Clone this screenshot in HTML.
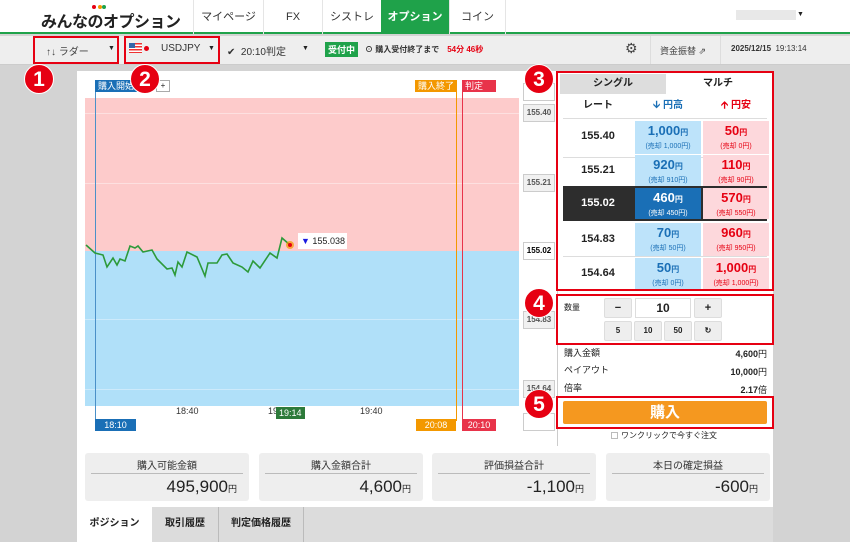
<!DOCTYPE html>
<html><head><meta charset="utf-8"><style>
*{box-sizing:border-box;margin:0;padding:0}
body{width:850px;height:542px;overflow:hidden;background:#d3d3d3;font-family:"Liberation Sans","Noto Sans CJK JP",sans-serif;position:relative;font-size:11px;color:#222}
.a{position:absolute}
.nav{left:0;top:0;width:850px;height:34px;background:#fff;border-bottom:2px solid #1fa24a}
.nv{top:0;height:34px;line-height:34px;text-align:center;font-size:11px;border-left:1px solid #e5e5e5;color:#333}
.tb{left:0;top:36px;width:850px;height:29px;background:#eee;border-bottom:1px solid #ccc}
.red{border:2px solid #e60012}
.circ{width:30px;height:30px;border-radius:50%;background:#e60012;color:#fff;font-size:21px;font-weight:bold;text-align:center;line-height:30px;border:1px solid #fff}
.lbl{font-size:9px;color:#fff;height:12px;line-height:12px;padding:0 3px}
.ax{width:32px;height:18px;background:#f1f1f1;border:1px solid #ccc;font-size:8px;font-weight:bold;color:#555;text-align:center;line-height:16px}
.row{left:563px;width:204px;height:40px;border-bottom:1px solid #ddd}
.rt{position:absolute;left:0;width:70px;text-align:center;top:12px;font-weight:bold;font-size:11px}
.bc,.rc{position:absolute;top:3px;width:66px;height:33px;text-align:center;font-weight:bold;font-size:13px;padding-top:3px;line-height:14px}
.bc{left:72px;background:#bde3fa;color:#1a6fb6}
.rc{left:140px;background:#fdd8dc;color:#e60012}
.bc small,.rc small{display:block;font-size:7px;font-weight:normal}
.bc i,.rc i{font-style:normal;font-size:8px}
.btn{background:#eee;border:1px solid #ddd;border-radius:2px;text-align:center;font-size:8px;font-weight:bold}
.card{top:453px;width:164px;height:48px;background:#eee;border-radius:3px}
.card .t{position:absolute;left:6px;right:6px;top:4px;height:17px;text-align:center;font-size:10px;border-bottom:1px solid #bbb;color:#333}
.card .v{position:absolute;right:12px;top:24px;font-size:17px;color:#222}
.card .v i{font-style:normal;font-size:9px}
</style></head><body>
<div class="a nav"></div>
<div class="a" style="left:41px;top:8px;font-size:16px;font-weight:bold;letter-spacing:-0.5px;color:#222">みんなのオプション</div>
<div class="a" style="left:92px;top:5px;width:4px;height:4px;border-radius:50%;background:#e60012"></div>
<div class="a" style="left:98px;top:5px;width:4px;height:4px;border-radius:50%;background:#f39800"></div>
<div class="a" style="left:102px;top:5px;width:4px;height:4px;border-radius:50%;background:#1fa24a"></div>
<div class="a nv" style="left:193px;width:70px">マイページ</div>
<div class="a nv" style="left:263px;width:59px">FX</div>
<div class="a nv" style="left:322px;width:59px">シストレ</div>
<div class="a nv" style="left:381px;width:68px;background:#1fa24a;color:#fff;font-weight:bold;border:none">オプション</div>
<div class="a nv" style="left:449px;width:56px">コイン</div>
<div class="a" style="left:505px;top:0;width:1px;height:34px;background:#e5e5e5"></div>
<div class="a" style="left:736px;top:10px;width:60px;height:10px;background:#e8e8e8"></div>
<div class="a" style="left:797px;top:11px;font-size:7px">▼</div>
<div class="a tb"></div>
<div class="a red" style="left:33px;top:36px;width:86px;height:28px"></div>
<div class="a" style="left:46px;top:43px;font-size:10px;color:#444">↑↓ ラダー</div>
<div class="a" style="left:108px;top:45px;font-size:7px">▼</div>
<div class="a red" style="left:124px;top:36px;width:96px;height:28px"></div>
<div class="a" style="left:129px;top:43px;width:13px;height:10px;background:repeating-linear-gradient(#e33 0 1.5px,#fff 1.5px 3px)"></div>
<div class="a" style="left:129px;top:43px;width:6px;height:5px;background:#3366aa"></div>
<div class="a" style="left:144px;top:46px;width:5px;height:5px;border-radius:50%;background:#e60012"></div>
<div class="a" style="left:161px;top:43px;font-size:10px;color:#333">USDJPY</div>
<div class="a" style="left:208px;top:45px;font-size:7px">▼</div>
<div class="a" style="left:227px;top:43px;font-size:10px;color:#333">✔&nbsp; 20:10判定</div>
<div class="a" style="left:302px;top:45px;font-size:7px">▼</div>
<div class="a" style="left:325px;top:42px;background:#1fa24a;color:#fff;font-size:9px;font-weight:bold;padding:1px 3px">受付中</div>
<div class="a" style="left:365px;top:44px;font-size:8px;font-weight:bold;color:#333">⊙ 購入受付終了まで　<span style="color:#e60012">54分 46秒</span></div>
<div class="a" style="left:625px;top:40px;font-size:14px;color:#444">⚙</div>
<div class="a" style="left:650px;top:36px;width:1px;height:28px;background:#ddd"></div>
<div class="a" style="left:660px;top:44px;font-size:9px;color:#444">資金振替 ⇗</div>
<div class="a" style="left:720px;top:36px;width:1px;height:28px;background:#ddd"></div>
<div class="a" style="left:731px;top:44px;font-size:8px;font-weight:bold;color:#333">2025/12/15 &nbsp;<span style="font-weight:normal">19:13:14</span></div>

<div class="a" style="left:77px;top:71px;width:696px;height:471px;background:#fff"></div>
<div class="a" style="left:85px;top:98px;width:434px;height:153px;background:#fdcbcb"></div>
<div class="a" style="left:85px;top:251px;width:434px;height:155px;background:#b0e0f9"></div>
<div class="a" style="left:85px;top:113px;width:434px;height:1px;background:#fde0e0"></div>
<div class="a" style="left:85px;top:183px;width:434px;height:1px;background:#fde0e0"></div>
<div class="a" style="left:85px;top:319px;width:434px;height:1px;background:#cdeafb"></div>
<div class="a" style="left:85px;top:389px;width:434px;height:1px;background:#cdeafb"></div>
<div class="a" style="left:95px;top:86px;width:1px;height:335px;background:#4a90c8"></div>
<div class="a" style="left:456px;top:86px;width:1px;height:335px;background:#f39800"></div>
<div class="a" style="left:462px;top:86px;width:1px;height:335px;background:#e8334a"></div>
<div class="a lbl" style="left:95px;top:80px;background:#1a6fb6">購入開始</div>
<div class="a" style="left:156px;top:80px;width:14px;height:12px;border:1px solid #aaa;font-size:8px;text-align:center;line-height:10px">+</div>
<div class="a lbl" style="left:415px;top:80px;background:#f39800">購入終了</div>
<div class="a lbl" style="left:462px;top:80px;background:#e8334a;width:34px">判定</div>
<svg class="a" style="left:0;top:0" width="850" height="542"><polyline fill="none" stroke="#2d9a3a" stroke-width="1.6" points="86,245 95,253 103,255 107,267 113,258 117,265 120,259 125,261 130,246 135,248 138,246 143,252 152,250 157,259 167,269 172,268 175,275 178,262 182,267 187,252 197,257 205,276 208,263 217,263 222,255 227,254 233,263 242,267 248,272 253,261 260,268 270,253 277,258 282,238 290,245"/><circle cx="290" cy="245" r="4" fill="#f39800" opacity=".7"/><circle cx="290" cy="245" r="2" fill="#e60012"/></svg>
<div class="a" style="left:298px;top:233px;width:49px;height:16px;background:#fff;font-size:9px;line-height:16px;padding-left:3px"><span style="color:#1a1ae0;font-size:9px">▼</span> 155.038</div>
<div class="a" style="left:176px;top:406px;font-size:9px;color:#333">18:40</div>
<div class="a" style="left:268px;top:406px;font-size:9px;color:#333">19</div>
<div class="a lbl" style="left:276px;top:407px;background:#2d7a3a;font-size:9px">19:14</div>
<div class="a" style="left:360px;top:406px;font-size:9px;color:#333">19:40</div>
<div class="a lbl" style="left:95px;top:419px;background:#1a6fb6;width:41px;text-align:center">18:10</div>
<div class="a lbl" style="left:416px;top:419px;background:#f39800;width:40px;text-align:center">20:08</div>
<div class="a lbl" style="left:462px;top:419px;background:#e8334a;width:34px;text-align:center">20:10</div>
<div class="a ax" style="left:523px;top:83px;background:#fff"></div>
<div class="a ax" style="left:523px;top:104px">155.40</div>
<div class="a ax" style="left:523px;top:174px">155.21</div>
<div class="a ax" style="left:523px;top:242px;background:#fff;color:#000">155.02</div>
<div class="a ax" style="left:523px;top:311px">154.83</div>
<div class="a ax" style="left:523px;top:380px">154.64</div>
<div class="a ax" style="left:523px;top:413px;background:#fff"></div>

<div class="a" style="left:557px;top:71px;width:216px;height:375px;background:#fff;border-left:1px solid #ccc"></div>
<div class="a" style="left:560px;top:74px;width:106px;height:20px;background:#ddd;text-align:center;line-height:20px;font-weight:bold;font-size:10px">シングル</div>
<div class="a" style="left:666px;top:74px;width:104px;height:20px;text-align:center;line-height:20px;font-weight:bold;font-size:10px">マルチ</div>
<div class="a" style="left:563px;top:96px;width:70px;text-align:center;font-weight:bold;font-size:10px;line-height:20px">レート</div>
<div class="a" style="left:635px;top:96px;width:66px;text-align:center;font-weight:bold;font-size:10px;line-height:20px;color:#1a6fb6">🡫 円高</div>
<div class="a" style="left:703px;top:96px;width:66px;text-align:center;font-weight:bold;font-size:10px;line-height:20px;color:#e60012">🡩 円安</div>
<div class="a" style="left:563px;top:118px;width:204px;height:1px;background:#ddd"></div>
<div class="a row" style="top:118px"><div class="rt">155.40</div><div class="bc">1,000<i>円</i><small>(売却 1,000円)</small></div><div class="rc">50<i>円</i><small>(売却 0円)</small></div></div>
<div class="a row" style="top:152px"><div class="rt">155.21</div><div class="bc">920<i>円</i><small>(売却 910円)</small></div><div class="rc">110<i>円</i><small>(売却 90円)</small></div></div>
<div class="a row" style="top:186px;background:#2d2d2d;height:35px;border:none"><div class="rt" style="color:#fff;top:11px">155.02</div><div class="bc" style="background:#1a6fb6;color:#fff;top:2px;height:31px">460<i>円</i><small>(売却 450円)</small></div><div class="rc" style="top:2px;height:31px">570<i>円</i><small>(売却 550円)</small></div></div>
<div class="a row" style="top:221px;height:36px"><div class="rt">154.83</div><div class="bc" style="top:2px">70<i>円</i><small>(売却 50円)</small></div><div class="rc" style="top:2px">960<i>円</i><small>(売却 950円)</small></div></div>
<div class="a row" style="top:255px;border:none"><div class="rt">154.64</div><div class="bc">50<i>円</i><small>(売却 0円)</small></div><div class="rc">1,000<i>円</i><small>(売却 1,000円)</small></div></div>
<div class="a red" style="left:556px;top:71px;width:218px;height:220px"></div>
<div class="a circ" style="left:524px;top:64px">3</div>

<div class="a" style="left:564px;top:302px;font-size:8px">数量</div>
<div class="a btn" style="left:604px;top:298px;width:28px;height:20px;line-height:18px;font-size:11px">−</div>
<div class="a" style="left:635px;top:298px;width:56px;height:20px;border:1px solid #ddd;text-align:center;font-weight:bold;font-size:12px;line-height:18px">10</div>
<div class="a btn" style="left:694px;top:298px;width:28px;height:20px;line-height:18px;font-size:11px">+</div>
<div class="a btn" style="left:604px;top:321px;width:28px;height:20px;line-height:18px">5</div>
<div class="a btn" style="left:634px;top:321px;width:28px;height:20px;line-height:18px">10</div>
<div class="a btn" style="left:664px;top:321px;width:28px;height:20px;line-height:18px">50</div>
<div class="a btn" style="left:694px;top:321px;width:28px;height:20px;line-height:18px">↻</div>
<div class="a red" style="left:556px;top:294px;width:218px;height:51px"></div>
<div class="a circ" style="left:524px;top:288px">4</div>
<div class="a" style="left:564px;top:346px;font-size:9px">購入金額</div>
<div class="a" style="left:700px;top:347px;width:67px;text-align:right;font-size:9px;font-weight:bold">4,600<span style="font-weight:normal">円</span></div>
<div class="a" style="left:564px;top:363px;font-size:9px">ペイアウト</div>
<div class="a" style="left:700px;top:365px;width:67px;text-align:right;font-size:9px;font-weight:bold">10,000<span style="font-weight:normal">円</span></div>
<div class="a" style="left:564px;top:381px;font-size:9px">倍率</div>
<div class="a" style="left:700px;top:383px;width:67px;text-align:right;font-size:9px;font-weight:bold">2.17<span style="font-weight:normal">倍</span></div>
<div class="a" style="left:563px;top:401px;width:204px;height:23px;background:#f5981f;border-radius:2px;color:#fff;font-weight:bold;font-size:15px;text-align:center;line-height:23px">購入</div>
<div class="a red" style="left:556px;top:396px;width:218px;height:33px"></div>
<div class="a circ" style="left:524px;top:389px">5</div>
<div class="a" style="left:611px;top:432px;width:7px;height:7px;border:1px solid #bbb"></div>
<div class="a" style="left:621px;top:430px;font-size:8px">ワンクリックで今すぐ注文</div>

<div class="a card" style="left:85px"><div class="t">購入可能金額</div><div class="v">495,900<i>円</i></div></div>
<div class="a card" style="left:259px"><div class="t">購入金額合計</div><div class="v">4,600<i>円</i></div></div>
<div class="a card" style="left:432px"><div class="t">評価損益合計</div><div class="v">-1,100<i>円</i></div></div>
<div class="a card" style="left:606px"><div class="t">本日の確定損益</div><div class="v">-600<i>円</i></div></div>
<div class="a" style="left:77px;top:507px;width:696px;height:35px;background:#dcdcdc"></div>
<div class="a" style="left:77px;top:507px;width:75px;height:35px;background:#fff;font-size:10px;font-weight:bold;text-align:center;line-height:33px">ポジション</div>
<div class="a" style="left:152px;top:507px;width:67px;height:35px;border-right:1px solid #bbb;font-size:10px;font-weight:bold;text-align:center;line-height:33px">取引履歴</div>
<div class="a" style="left:219px;top:507px;width:85px;height:35px;border-right:1px solid #bbb;font-size:10px;font-weight:bold;text-align:center;line-height:33px">判定価格履歴</div>

<div class="a circ" style="left:24px;top:64px">1</div>
<div class="a circ" style="left:130px;top:64px">2</div>
</body></html>
